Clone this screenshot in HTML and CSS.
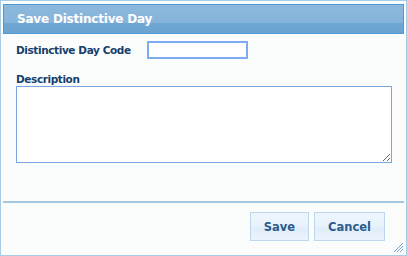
FILE: index.html
```html
<!DOCTYPE html>
<html>
  <head>
    <meta charset="UTF-8" />
    <title>Save Distinctive Day</title>
    <link rel="stylesheet" href="styles.css">
  </head>
  <body>
    <div class="dialog">
      <div class="titlebar">Save Distinctive Day</div>
      <div class="content">
        <div class="row">
          <label class="label" for="code">Distinctive Day Code</label>
          <input class="code-input" id="code" type="text" />
        </div>
        <label class="label desc-label" for="desc">Description</label>
        <textarea class="desc" id="desc"></textarea>
      </div>
      <div class="footer">
        <button class="btn">Save</button>
        <button class="btn">Cancel</button>
      </div>
      <svg class="grip" width="12" height="12" viewBox="0 0 12 12">
        <path d="M11 2 L2 11 M11 5 L5 11 M11 8 L8 11" stroke="#6fa3d4" stroke-width="1" />
      </svg>
    </div>
  </body>
</html>
```

FILE: styles.css
```css
body {
   margin: 0;
   font-family: "DejaVu Sans", Verdana, sans-serif;
}
.dialog {
   position: relative;
   box-sizing: border-box;
   width: 407px;
   height: 256px;
   border: 1px solid #a9cce6;
   background-color: #fbfdfd;
   padding: 3px 2px 0 2px;
   display: flex;
   flex-direction: column;
}
.titlebar {
   height: 28px;
   border: 1px solid #4f9ad8;
   background: linear-gradient(to bottom, #8cb8dc 0%, #86b4da 62%, #6fa7d3 66%, #6aa3d1 100%);
   color: white;
   font-weight: bold;
   font-size: 12px;
   letter-spacing: -0.2px;
   line-height: 28px;
   padding-left: 13px;
}
.content {
   padding: 7px 12px 0 13px;
   display: flex;
   flex-direction: column;
   height: 169px;
   border-bottom: 2px solid #a6c6de;
   box-sizing: border-box;
}
.row {
   display: flex;
   align-items: center;
}
.label {
   color: #173e6c;
   font-weight: bold;
   font-size: 10.5px;
   letter-spacing: -0.4px;
}
.code-input {
   margin-left: 16px;
   width: 101px;
   height: 18px;
   box-sizing: border-box;
   border: 2px solid #7eacf0;
   outline: none;
   padding: 0;
   background: white;
}
.desc-label {
   margin-top: 14px;
   line-height: 12px;
}
.desc {
   margin: 1px 0 0 0;
   width: 376px;
   height: 77px;
   box-sizing: border-box;
   border: 1px solid #7aa7dc;
   background: white;
   resize: both;
}
.footer {
   display: flex;
   justify-content: flex-end;
   gap: 5px;
   padding: 9px 19px 0 0;
}
.btn {
   font-family: "DejaVu Sans", Verdana, sans-serif;
   font-weight: bold;
   font-size: 11.5px;
   color: #2b5b8c;
   height: 29px;
   padding: 0 13px;
   border: 1px solid #bed7ec;
   background: linear-gradient(to bottom, #eef5fc 0%, #e8f2fc 50%, #dfedfb 55%, #eaf3fc 100%);
}
.grip {
   position: absolute;
   right: 2px;
   bottom: 2px;
}
```
